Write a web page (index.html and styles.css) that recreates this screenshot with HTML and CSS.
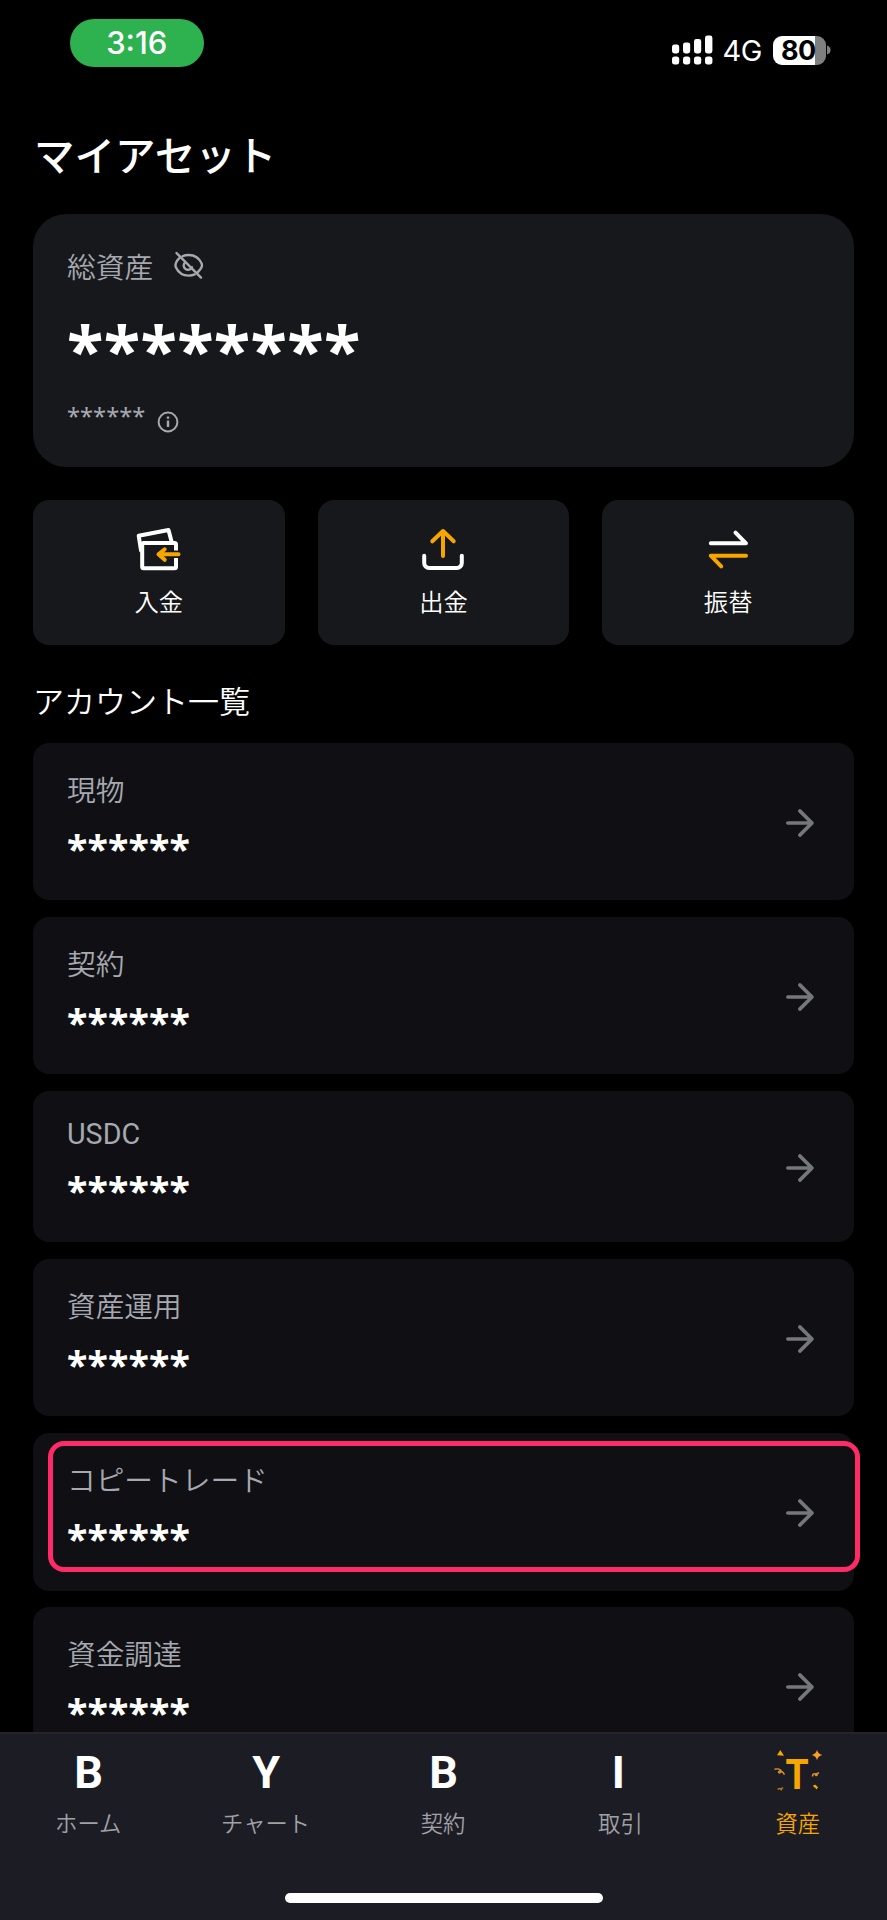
FILE: index.html
```html
<!DOCTYPE html>
<html lang="ja">
<head>
<meta charset="utf-8">
<title>マイアセット</title>
<link rel="stylesheet" href="styles.css">
</head>
<body>
<svg width="0" height="0" class="defs" aria-hidden="true">
  <symbol id="arrow" viewBox="0 0 32 32"><path d="M3.8 16H28M15.8 3.9 28 16 15.8 28.1" fill="none" stroke="currentColor" stroke-width="3.6" stroke-linecap="round" stroke-linejoin="round"/></symbol>
</svg>
<div class="screen">
  <header class="status">
    <div class="time">3:16</div>
    <div class="indicators">
      <svg class="signal" width="42" height="30" viewBox="0 0 42 30" fill="#fff">
        <rect x="0" y="9.6" width="7.2" height="8.8" rx="2.4"/><rect x="11" y="7.4" width="7.2" height="11" rx="2.4"/><rect x="22" y="4" width="7.2" height="14.4" rx="2.4"/><rect x="33" y="0.6" width="7.4" height="17.8" rx="2.4"/>
        <rect x="0" y="21.6" width="7.2" height="7.8" rx="2.6"/><rect x="11" y="21.6" width="7.2" height="7.8" rx="2.6"/><rect x="22" y="21.6" width="7.2" height="7.8" rx="2.6"/><rect x="33" y="21.6" width="7.4" height="7.8" rx="2.6"/>
      </svg>
      <span class="network">4G</span>
      <div class="battery"><span class="level">80</span></div>
      <svg class="cap" width="4" height="10" viewBox="0 0 4 10"><path d="M0 0.5Q3.6 1.5 3.6 5T0 9.5Z" fill="#7f7f7f"/></svg>
    </div>
  </header>
  <main class="content">
    <h1 class="title">マイアセット</h1>
    <section class="total">
      <div class="total-head">
        <span class="total-label">総資産</span>
        <svg class="eye" width="34" height="32" viewBox="0 0 34 32" fill="none" stroke="#a6a9b0" stroke-width="2.4" stroke-linecap="round" stroke-linejoin="round">
          <path d="M10.500 6.300C12.300 5.400 14.400 5 16.800 5c6.700 0 10.800 4.200 12.700 8.300q.9 2 0 4c-.8 1.700-2 3.300-3.600 4.700M7.300 8.200c-1.500 1.400-2.600 3-3.300 4.700q-1 2.300 0 4.600C6 21.800 10.200 25.600 16.800 25.600c2.200 0 4.200-.4 5.900-1.200"/>
          <path d="M13.300 12.100a4.300 4.300 0 1 0 6.600 5.100M4.500 3 29 27.600"/>
        </svg>
      </div>
      <div class="total-value">********</div>
      <div class="total-sub">
        <span class="sub-value">******</span>
        <svg width="22" height="22" viewBox="0 0 22 22" fill="none" stroke="#a6a9b0" stroke-width="2"><circle cx="11" cy="11" r="9.400"/><path d="M11 9.500v6.500M11 5.600v2.200" stroke-width="2.400"/></svg>
      </div>
    </section>
    <nav class="actions">
      <div class="action">
        <svg width="48" height="48" viewBox="0 0 48 48" fill="none" stroke-width="4" stroke-linecap="round" stroke-linejoin="round">
          <path d="M6 25.500 3.700 10.800 33.500 5 36.800 17.500" stroke="#fff"/>
          <path d="M41 25.500V19.500q0-1.500-1.500-1.500H8.700q-1.500 0-1.500 1.500V41.800q0 1.500 1.500 1.500H39.500q1.500 0 1.500-1.500V33" stroke="#fff" stroke-linecap="butt"/>
          <path d="M43.500 29.300H23.500M29.700 24.300 23.500 29.300 29.700 34.800" stroke="#f7a600"/>
        </svg>
        <span class="action-label">入金</span>
      </div>
      <div class="action">
        <svg width="48" height="48" viewBox="0 0 48 48" fill="none" stroke-width="4" stroke-linecap="round" stroke-linejoin="round">
          <path d="M5.200 30.700V38a5 5 0 0 0 5 5h27.600a5 5 0 0 0 5-5V30.700" stroke="#fff"/>
          <path d="M24 31V6M13.300 16.300 24 6 34.700 16.300" stroke="#f7a600"/>
        </svg>
        <span class="action-label">出金</span>
      </div>
      <div class="action">
        <svg width="48" height="48" viewBox="0 0 48 48" fill="none" stroke-width="4" stroke-linecap="round" stroke-linejoin="round">
          <path d="M6.800 18.300H42L31.500 7.600" stroke="#fff"/>
          <path d="M42 30.700H6.800L17.200 41.300" stroke="#f7a600"/>
        </svg>
        <span class="action-label">振替</span>
      </div>
    </nav>
    <h2 class="subtitle">アカウント一覧</h2>
    <section class="accounts">
      <div class="account"><div><div class="name">現物</div><div class="amount">******</div></div><svg class="go"><use href="#arrow"/></svg></div>
      <div class="account"><div><div class="name">契約</div><div class="amount">******</div></div><svg class="go"><use href="#arrow"/></svg></div>
      <div class="account account-latin"><div><div class="name">USDC</div><div class="amount">******</div></div><svg class="go"><use href="#arrow"/></svg></div>
      <div class="account"><div><div class="name">資産運用</div><div class="amount">******</div></div><svg class="go"><use href="#arrow"/></svg></div>
      <div class="account marked"><div><div class="name">コピートレード</div><div class="amount">******</div></div><svg class="go"><use href="#arrow"/></svg></div>
      <div class="account"><div><div class="name">資金調達</div><div class="amount">******</div></div><svg class="go"><use href="#arrow"/></svg></div>
    </section>
  </main>
  <footer class="tabbar">
    <div class="tabs">
      <div class="tab"><span class="letter">B</span><span class="tab-label">ホーム</span></div>
      <div class="tab"><span class="letter">Y</span><span class="tab-label">チャート</span></div>
      <div class="tab"><span class="letter">B</span><span class="tab-label">契約</span></div>
      <div class="tab"><span class="letter letter-i">I</span><span class="tab-label">取引</span></div>
      <div class="tab active">
        <svg class="party" width="50" height="50" viewBox="0 0 50 50">
          <text class="party-letter" x="0" y="0" text-anchor="middle" transform="translate(24 42.300) scale(.87 1)">T</text>
          <path d="M4 8.300 7.300 3 11 8.700Z" fill="#f7a600"/>
          <path d="M44 2.800Q45 7 49.300 8 45 9 44 13.200 43 9 38.800 8 43 7 44 2.800Z" fill="#ff9c2e"/>
          <g fill="none" stroke="#e0902c" stroke-width="1.400">
            <path d="M1.500 22.200q4-1 6 .8t-1 3q-2-.5 0-1.800 2.500-1 5 3.500"/>
            <path d="M39.500 29.500q0-3.500 3-2.500t.5 1.500q-2-1 3-2.800" stroke-width="1.600"/>
            <path d="M5 42.800q.5-1.800 2.500-1t.5 1q-1-1 2.200-2.200" stroke="#b57a1a"/>
          </g>
          <path d="m40.500 38 2-.2 2.500 2.500-1.500 2.200q-1-2.300-3-2.500Z" fill="#f7a600"/>
        </svg>
        <span class="tab-label">資産</span>
      </div>
    </div>
    <div class="home-bar"></div>
  </footer>
</div>
</body>
</html>
```

FILE: styles.css
```css
*, *::after { box-sizing: border-box; }
body { margin: 0; background: #000; font-family: "Noto Sans CJK JP", sans-serif; color: #fff; }
svg { flex: none; display: block; }
.defs { position: absolute; }
.screen { width: 887px; height: 1920px; overflow: hidden; display: flex; flex-direction: column; }

.status { flex: none; height: 104px; display: flex; justify-content: space-between; padding: 18.500px 56px 0 70px; font-family: Inter, sans-serif; }
.time { width: 133.500px; height: 48px; border-radius: 24px; background: #2eb14f; text-align: center; font-size: 31px; font-weight: 450; line-height: 48px; }
.indicators { display: flex; align-items: center; height: 30px; margin-top: 16.500px; }
.network { width: 40px; margin: 2px 10px 0 9px; font-size: 29px; line-height: 30px; white-space: nowrap; letter-spacing: -.5px; }
.battery { width: 53px; height: 29px; border-radius: 9px; background: linear-gradient(90deg, #fff 42px, #7f7f7f 42px); color: #000; }
.level { display: block; padding-left: 8.500px; font-size: 27px; font-weight: 700; line-height: 29px; letter-spacing: -.5px; }
.cap { margin-left: 1.500px; }

.content { flex: 1; min-height: 0; overflow: hidden; padding: 0 33px; display: flex; flex-direction: column; }
.title { flex: none; margin: 19.500px 0 0; height: 90px; font-size: 40.500px; font-weight: 500; line-height: 60px; padding-left: 1px; }
.total { flex: none; height: 253px; border-radius: 33px; background: #17181c; padding: 33px 34px; }
.total-head { display: flex; gap: 19px; height: 36px; }
.total-label { font-size: 28.800px; font-weight: 350; line-height: 38px; color: #a6a9b0; }
.eye { margin-top: 3px; }
.total-value { height: 80px; margin-top: 26.500px; font: 700 67px/80px "Noto Sans", sans-serif; letter-spacing: .4px; }
.total-sub { display: flex; gap: 12px; align-items: flex-start; margin-top: 8.500px; }
.total-sub svg { margin-top: 13px; }
.sub-value { font: 400 23.700px/36px "Noto Sans", sans-serif; color: #a6a9b0; }

.actions { flex: none; display: grid; grid-template-columns: repeat(3, 1fr); gap: 33px; margin-top: 33px; }
.action { height: 145px; border-radius: 16px; background: #17181c; display: flex; flex-direction: column; align-items: center; padding-top: 25px; gap: 10px; }
.action-label { font-size: 24.300px; font-weight: 350; line-height: 36px; }
.subtitle { flex: none; margin: 35px 0 23px; font-size: 31px; font-weight: 350; line-height: 40px; }

.accounts { display: flex; flex-direction: column; gap: 16.700px; }
.account { flex: none; position: relative; height: 157.600px; border-radius: 16px; background: #101014; display: flex; justify-content: space-between; padding: 28px 38px 0 34px; }
.name { font-size: 28.700px; font-weight: 350; line-height: 36px; color: #a6a9b0; }
.amount { height: 48px; margin-top: 18px; font: 700 37.600px/48px "Noto Sans", sans-serif; letter-spacing: .15px; }
.go { width: 32px; height: 32px; color: #74777c; margin-top: 36px; }
.account-latin { height: 151px; }
.account-latin .name { font-family: Roboto, sans-serif; font-weight: 400; line-height: 31px; height: 30px; }
.account-latin .go { margin-top: 33px; }
.marked::after { content: ""; position: absolute; left: 15px; top: 8px; width: 812px; height: 131px; border: 5px solid #ff2b68; border-radius: 16px; }

.tabbar { flex: none; height: 188px; border-top: 2px solid #242429; background: #1c1c24; display: flex; flex-direction: column; align-items: center; justify-content: space-between; padding-bottom: 17px; }
.tabs { align-self: stretch; display: grid; grid-template-columns: repeat(5, 1fr); }
.tab { display: flex; flex-direction: column; align-items: center; padding-top: 13px; color: #a0a1a6; }
.letter { height: 59px; font: 700 45px/51px Roboto, sans-serif; color: #fff; }
.letter-i { margin-right: 5px; }
.party { margin-bottom: 9px; overflow: visible; }
.party-letter { font: 700 43px Roboto, sans-serif; fill: #f7a600; }
.tab-label { font-size: 22.300px; font-weight: 350; line-height: 32px; margin-right: 1px; }
.active { color: #f7a600; }
.home-bar { width: 318px; height: 10.500px; border-radius: 6px; background: #fff; }
```
